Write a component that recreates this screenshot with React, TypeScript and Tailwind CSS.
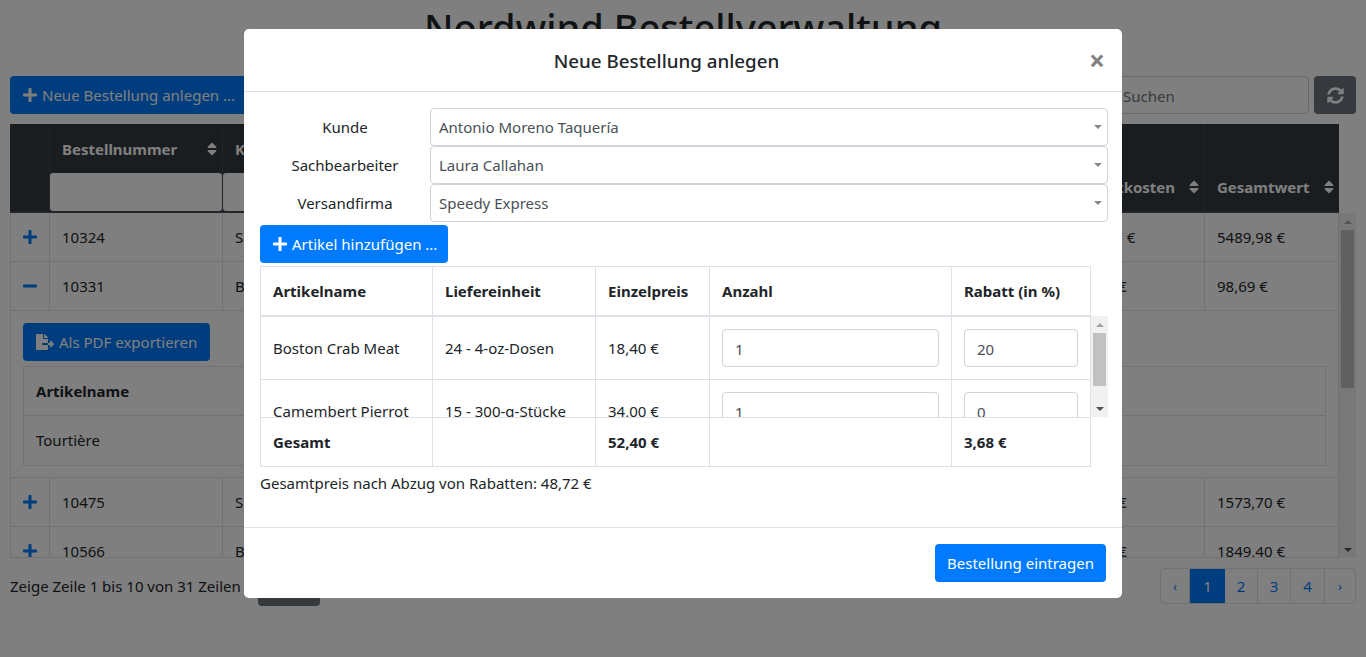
import { FaPlus, FaMinus, FaFileExport, FaSyncAlt, FaSort } from 'react-icons/fa';

const orderRows = [
  { id: '10324', customer: 'Save-a-lot Markets', shipping: '214,27 €', total: '5489,98 €' },
  { id: '10331', customer: 'Bon app', shipping: '10,19 €', total: '98,69 €', open: true },
  { id: '10475', customer: 'Suprêmes délices', shipping: '68,52 €', total: '1573,70 €' },
  { id: '10566', customer: 'Blondel père et fils', shipping: '88,40 €', total: '1849,40 €' },
];

function SortHeader({ label }: { label: string }) {
  return (
    <div className="flex items-center justify-between pl-[12px] pr-[2px]">
      <span className="font-bold whitespace-nowrap">{label}</span>
      <FaSort className="text-[16px] text-white" />
    </div>
  );
}

function Triangle({ up, className }: { up?: boolean; className: string }) {
  return (
    <svg width="8" height="4" viewBox="0 0 8 4" className={className}>
      <path d={up ? 'M0 4 L4 0 L8 4 Z' : 'M0 0 L8 0 L4 4 Z'} fill="currentColor" />
    </svg>
  );
}

function Scrollbar({ thumb }: { thumb: string }) {
  return (
    <div className="flex w-[17px] flex-col items-center bg-[#f1f1f1]">
      <div className="flex h-[17px] items-center justify-center">
        <Triangle up className="text-[#a3a3a3]" />
      </div>
      <div className={`${thumb} w-[13px] bg-[#c1c1c1]`} />
      <div className="flex-1" />
      <div className="flex h-[17px] items-center justify-center">
        <Triangle className="text-[#505050]" />
      </div>
    </div>
  );
}

function Background() {
  return (
    <div className="px-[10px]">
      <h1 className="h-[76px] pt-[3px] text-center text-[38px] leading-[48px] font-medium">Nordwind Bestellverwaltung</h1>
      <div className="flex h-[38px] justify-between">
        <button className="flex items-center gap-[4px] rounded bg-[#007bff] pl-[12px] pr-[13px] text-white">
          <FaPlus className="text-[16px]" />
          Neue Bestellung anlegen ...
        </button>
        <div className="flex gap-[5px]">
          <input placeholder="Suchen" className="w-[200px] rounded border border-[#ced4da] px-[13px] pt-[2px] placeholder:text-[#6c757d]" />
          <button className="flex w-[42px] items-center justify-center rounded bg-[#6c757d] text-white">
            <FaSyncAlt className="text-[17px]" />
          </button>
        </div>
      </div>
      <div className="mt-[10px] flex h-[89px] w-[1329px] border-b-2 border-[#454d55] bg-[#343a40] text-white">
        <div className="w-[40px] border-r border-[#454d55]" />
        <div className="flex w-[173px] flex-col justify-between border-r border-[#454d55] pt-[13px]">
          <SortHeader label="Bestellnummer" />
          <input className="h-[38px] w-[172px] rounded-[3px] bg-white" />
        </div>
        <div className="flex w-[841px] flex-col justify-between border-r border-[#454d55] pt-[13px]">
          <SortHeader label="Kunde" />
          <input className="h-[38px] w-[200px] rounded-[3px] bg-white" />
        </div>
        <div className="flex w-[141px] flex-col justify-end border-r border-[#454d55] pb-[12px]">
          <SortHeader label="Frachtkosten" />
        </div>
        <div className="flex w-[134px] flex-col justify-end pb-[12px]">
          <SortHeader label="Gesamtwert" />
        </div>
      </div>
      <div className="flex h-[345px] w-[1346px]">
        <div className="h-full w-[1329px] overflow-hidden border-x border-b border-[#dee2e6]">
          {orderRows.map((row) => (
            <div key={row.id}>
              <div className="flex h-[49px] items-center border-b border-[#dee2e6]">
                <div className="flex h-full w-[39px] items-center justify-center border-r border-[#dee2e6] text-[#007bff]">
                  {row.open ? <FaMinus className="text-[16px]" /> : <FaPlus className="text-[16px]" />}
                </div>
                <div className="flex h-full w-[173px] items-center border-r border-[#dee2e6] px-[12px]">{row.id}</div>
                <div className="flex h-full w-[841px] items-center border-r border-[#dee2e6] px-[12px]">{row.customer}</div>
                <div className="flex h-full w-[141px] items-center border-r border-[#dee2e6] px-[12px]">{row.shipping}</div>
                <div className="flex h-full items-center px-[12px]">{row.total}</div>
              </div>
              {row.open && (
                <div className="h-[167px] border-b border-[#dee2e6] px-[12px] pt-[12px]">
                  <button className="flex h-[38px] w-[187px] items-center gap-[5px] rounded bg-[#007bff] pl-[13px] text-white">
                    <FaFileExport className="text-[18px]" />
                    Als PDF exportieren
                  </button>
                  <div className="mt-[5px] w-[1303px] border border-[#dee2e6]">
                    <div className="flex h-[49px] items-center border-b border-[#dee2e6] px-[12px] font-bold">Artikelname</div>
                    <div className="flex h-[49px] items-center px-[12px] pb-[2px]">Tourtière</div>
                  </div>
                </div>
              )}
            </div>
          ))}
        </div>
        <Scrollbar thumb="h-[158px]" />
      </div>
      <div className="mt-[10px] flex items-start justify-between">
        <div className="flex items-start">
          <span className="w-[248px] pt-[6px]">Zeige Zeile 1 bis 10 von 31 Zeilen</span>
          <div className="h-[38px] w-[62px] rounded bg-[#6c757d]" />
        </div>
        <div className="flex h-[36px] overflow-hidden rounded border border-[#dee2e6] text-[#007bff]">
          <div className="flex w-[29px] items-center justify-center border-r border-[#dee2e6] text-[13px]">‹</div>
          <div className="flex w-[35px] items-center justify-center bg-[#007bff] text-white">1</div>
          <div className="flex w-[33px] items-center justify-center border-r border-[#dee2e6]">2</div>
          <div className="flex w-[33px] items-center justify-center border-r border-[#dee2e6]">3</div>
          <div className="flex w-[34px] items-center justify-center border-r border-[#dee2e6]">4</div>
          <div className="flex w-[30px] items-center justify-center text-[13px]">›</div>
        </div>
      </div>
    </div>
  );
}

function FormSelect({ label, value }: { label: string; value: string }) {
  return (
    <div className="flex h-[38px] items-center">
      <div className="w-[170px] text-center">{label}</div>
      <div className="relative flex-1">
        <select
          defaultValue={value}
          className="h-[38px] w-full appearance-none rounded border border-[#ced4da] bg-white px-[8px] text-[#495057]"
        >
          <option>{value}</option>
        </select>
        <Triangle className="absolute top-[17px] right-[6px] text-[#888888]" />
      </div>
    </div>
  );
}

const colWidths = ['w-[172px]', 'w-[163px]', 'w-[114px]', 'w-[242px]', 'w-[138px]'];
const articleHeads = ['Artikelname', 'Liefereinheit', 'Einzelpreis', 'Anzahl', 'Rabatt (in %)'];

function ArticleRow({ name, unit, price, qty, discount }: { name: string; unit: string; price: string; qty: string; discount: string }) {
  return (
    <div className="flex h-[63px] border-b border-[#dee2e6]">
      <div className="w-[172px] shrink-0 border-r border-[#dee2e6] pl-[12px] pt-[19px]">{name}</div>
      <div className="w-[163px] shrink-0 border-r border-[#dee2e6] pl-[12px] pt-[19px]">{unit}</div>
      <div className="w-[114px] shrink-0 border-r border-[#dee2e6] pl-[12px] pt-[19px]">{price}</div>
      <div className="w-[242px] shrink-0 border-r border-[#dee2e6] px-[12px] pt-[12px]">
        <input defaultValue={qty} className="h-[38px] w-[217px] rounded border border-[#ced4da] px-[12px] pt-[2px] text-[#495057]" />
      </div>
      <div className="w-[138px] shrink-0 pl-[12px] pt-[12px]">
        <input defaultValue={discount} className="h-[38px] w-[114px] rounded border border-[#ced4da] px-[12px] pt-[2px] text-[#495057]" />
      </div>
    </div>
  );
}

function OrderModal() {
  return (
    <div className="absolute inset-0 flex items-start justify-center bg-black/50 pt-[29px]">
      <div className="flex h-[569px] w-[878px] flex-col rounded-[5px] bg-white">
        <div className="flex h-[63px] shrink-0 items-center border-b border-[#dee2e6] pr-[17px]">
          <div className="flex-1 pt-[2px] text-center text-[18.75px] font-medium">Neue Bestellung anlegen</div>
          <span className="text-[28px] leading-none font-bold text-[#808080]">×</span>
        </div>
        <div className="flex-1 px-[16px] pt-[16px]">
          <div className="w-[848px]">
            <FormSelect label="Kunde" value="Antonio Moreno Taquería" />
            <FormSelect label="Sachbearbeiter" value="Laura Callahan" />
            <FormSelect label="Versandfirma" value="Speedy Express" />
          </div>
          <button className="mt-[3px] flex h-[38px] w-[188px] items-center gap-[4px] rounded bg-[#007bff] pl-[12px] text-white">
            <FaPlus className="text-[16px]" />
            Artikel hinzufügen ...
          </button>
          <div className="mt-[3px] w-[831px] border-x border-t border-[#dee2e6]">
            <div className="flex h-[50px] border-b-2 border-[#dee2e6] font-bold">
              {articleHeads.map((head, i) => (
                <div key={head} className={`${colWidths[i]} flex shrink-0 items-center border-r border-[#dee2e6] pl-[12px] last:border-r-0`}>
                  {head}
                </div>
              ))}
            </div>
          </div>
          <div className="flex h-[100px] w-[848px]">
            <div className="h-full w-[831px] overflow-hidden border-x border-[#dee2e6]">
              <ArticleRow name="Boston Crab Meat" unit="24 - 4-oz-Dosen" price="18,40 €" qty="1" discount="20" />
              <ArticleRow name="Camembert Pierrot" unit="15 - 300-g-Stücke" price="34,00 €" qty="1" discount="0" />
            </div>
            <div className="-mt-px flex h-[101px]">
              <Scrollbar thumb="h-[53px]" />
            </div>
          </div>
          <div className="flex h-[50px] w-[831px] border border-[#dee2e6] font-bold">
            <div className="flex w-[172px] shrink-0 items-center border-r border-[#dee2e6] pl-[12px]">Gesamt</div>
            <div className="w-[163px] shrink-0 border-r border-[#dee2e6]" />
            <div className="flex w-[114px] shrink-0 items-center border-r border-[#dee2e6] pl-[12px]">52,40 €</div>
            <div className="w-[242px] shrink-0 border-r border-[#dee2e6]" />
            <div className="flex items-center pl-[12px]">3,68 €</div>
          </div>
          <p className="mt-[4px] leading-[24px]">Gesamtpreis nach Abzug von Rabatten: 48,72 €</p>
        </div>
        <div className="flex h-[71px] shrink-0 items-center justify-end border-t border-[#dee2e6] pr-[16px]">
          <button className="h-[38px] w-[171px] rounded bg-[#007bff] text-white">Bestellung eintragen</button>
        </div>
      </div>
    </div>
  );
}

export default function App() {
  return (
    <div className="relative h-[657px] overflow-hidden bg-white font-['Noto_Sans',sans-serif] text-[15px] leading-[24px] text-[#212529]">
      <Background />
      <OrderModal />
    </div>
  );
}
